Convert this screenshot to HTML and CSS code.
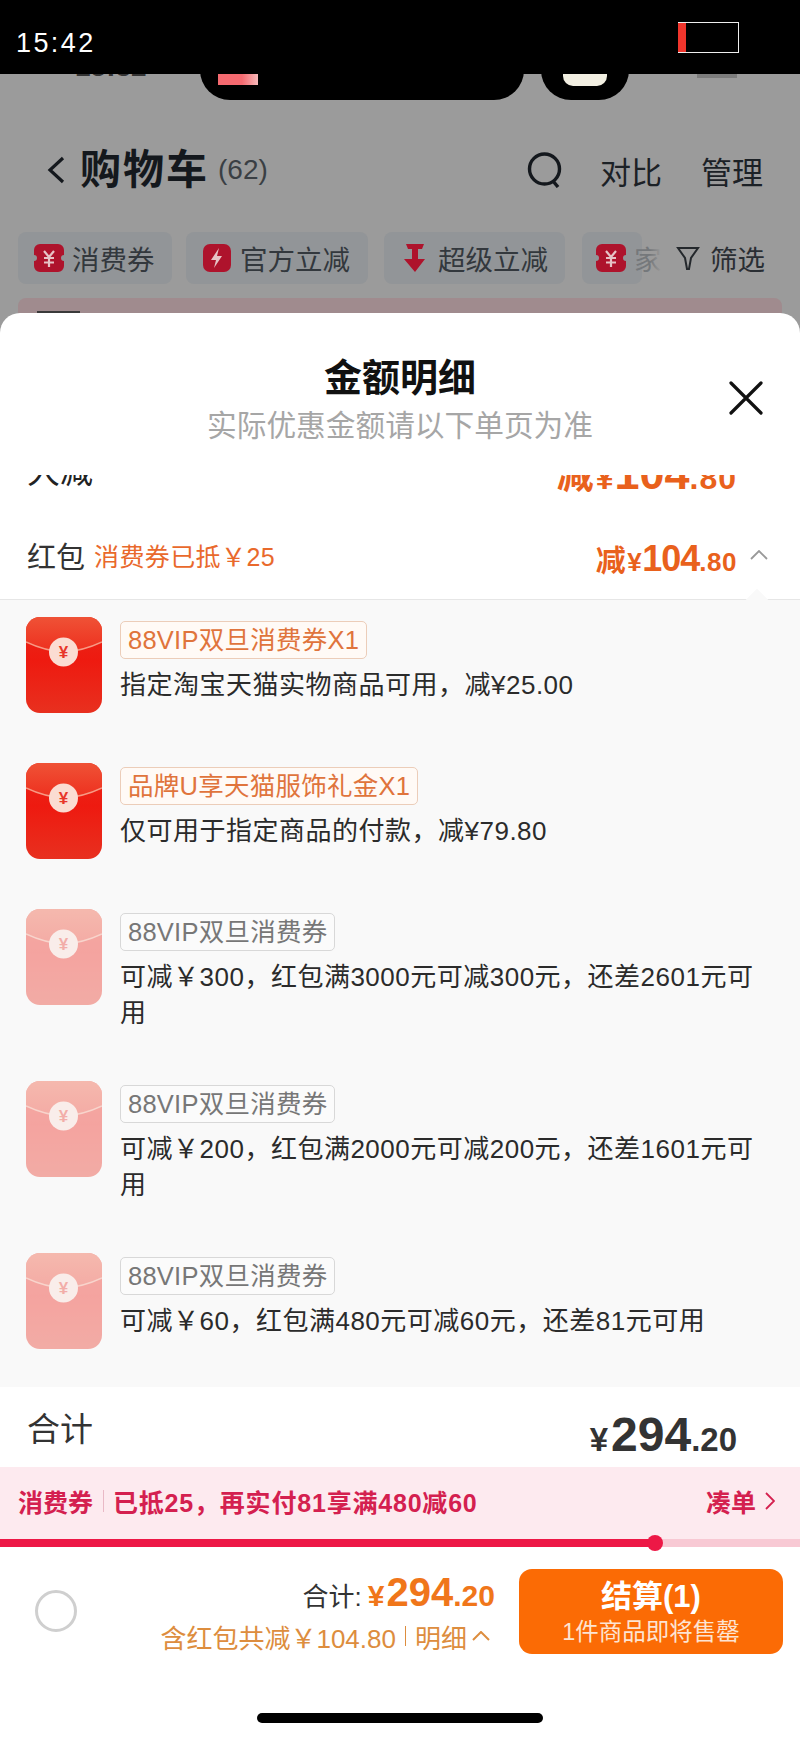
FILE: index.html
```html
<!DOCTYPE html>
<html lang="zh-CN">
<head>
  <meta charset="UTF-8">
  <title>金额明细</title>
  <link rel="stylesheet" href="styles.css">
</head>
<body>

  <svg class="defs" width="0" height="0" aria-hidden="true">
    <defs>
      <linearGradient id="flap" x1="0" y1="0" x2="0" y2="1">
        <stop offset="0" stop-color="#ef5236"/>
        <stop offset="1" stop-color="#ee2f1e"/>
      </linearGradient>
      <linearGradient id="pocket" x1="0" y1="0" x2="0" y2="1">
        <stop offset="0" stop-color="#e8281a"/>
        <stop offset="0.45" stop-color="#ee1a10"/>
        <stop offset="1" stop-color="#e8301f"/>
      </linearGradient>
      <symbol id="packet" viewBox="0 0 76 96">
        <rect width="76" height="96" rx="14" fill="url(#pocket)"/>
        <path d="M0 25 Q19 34 38 35 Q57 34 76 25 V14 A14 14 0 0 0 62 0 H14 A14 14 0 0 0 0 14 Z" fill="url(#flap)"/>
        <path d="M0 25 Q19 34 38 35 Q57 34 76 25" fill="none" stroke="#f79a85" stroke-width="1.5"/>
        <circle cx="37.5" cy="35" r="14.5" fill="#fbdcd2"/>
        <text x="37.5" y="41" class="seal">¥</text>
      </symbol>
    </defs>
  </svg>

  <div class="status">
    <span class="clock">15:42</span>
    <span class="battery"><span class="battery-low"></span></span>
  </div>

  <div class="notch notch-wide"><span class="notch-pink"></span></div>
  <div class="notch notch-small"><span class="notch-cream"></span></div>

  <div class="page">
    <div class="peek"><span class="peek-time">15:32</span><span class="peek-batt"></span></div>

    <div class="nav">
      <svg class="back" viewBox="0 0 18 28"><path d="M16 2 L3 14 L16 26" fill="none" stroke="#14181d" stroke-width="3.2"/></svg>
      <span class="nav-title">购物车</span>
      <span class="nav-count">(62)</span>
      <svg class="search" viewBox="0 0 36 36"><circle cx="17.5" cy="17" r="15" fill="none" stroke="#14181d" stroke-width="3.4"/><path d="M26 29 L31 35" stroke="#14181d" stroke-width="3.4"/></svg>
      <span class="nav-link">对比</span>
      <span class="nav-link nav-link-last">管理</span>
    </div>

    <div class="chips">
      <div class="chip chip-a">
        <svg class="chip-icon" viewBox="0 0 30 28"><path d="M6 0 H24 A6 6 0 0 1 30 6 V11 A3 3 0 0 0 30 17 V22 A6 6 0 0 1 24 28 H6 A6 6 0 0 1 0 22 V17 A3 3 0 0 0 0 11 V6 A6 6 0 0 1 6 0 Z" fill="#ae132c"/><path d="M10 7 L15 13 L20 7 M10 14 H20 M10 18.5 H20 M15 13 V23" fill="none" stroke="#e6c3c6" stroke-width="2.2"/></svg>
        <span>消费券</span>
      </div>
      <div class="chip chip-b">
        <svg class="chip-icon" viewBox="0 0 30 28"><rect width="28" height="28" x="1" rx="7" fill="#ae132c"/><path d="M17 4 L9 16 H14 L12 24 L20 12 H15 Z" fill="#e6c3c6"/></svg>
        <span>官方立减</span>
      </div>
      <div class="chip chip-c">
        <svg class="chip-icon" viewBox="0 0 24 28"><path d="M3 0 H21 L19 5 H15 V15 H22 L12 28 L1 15 H9 V5 H5 Z" fill="#ae132c"/></svg>
        <span>超级立减</span>
      </div>
      <div class="chip chip-d">
        <svg class="chip-icon" viewBox="0 0 30 28"><path d="M6 0 H24 A6 6 0 0 1 30 6 V11 A3 3 0 0 0 30 17 V22 A6 6 0 0 1 24 28 H6 A6 6 0 0 1 0 22 V17 A3 3 0 0 0 0 11 V6 A6 6 0 0 1 6 0 Z" fill="#ae132c"/><path d="M10 7 L15 13 L20 7 M10 14 H20 M10 18.5 H20 M15 13 V23" fill="none" stroke="#e6c3c6" stroke-width="2.2"/></svg>
        <span class="chip-fade">家</span>
      </div>
      <div class="filter">
        <svg class="filter-icon" viewBox="0 0 24 24"><path d="M2 2 H22 L15 12 L13 23 H11 L9 12 Z" fill="none" stroke="#24282c" stroke-width="2"/></svg>
        <span>筛选</span>
      </div>
    </div>

    <div class="tip-band"><span class="tip-mark"></span></div>
  </div>

  <div class="sheet">
    <div class="sheet-head">
      <div class="sheet-title">金额明细</div>
      <div class="sheet-sub">实际优惠金额请以下单页为准</div>
      <svg class="close" viewBox="0 0 34 34"><path d="M2 2 L32 32 M32 2 L2 32" stroke="#111" stroke-width="3.2" stroke-linecap="round"/></svg>
    </div>

    <div class="cut-row">
      <span class="cut-label">大减</span>
      <span class="amount amount-big"><span class="amount-cn">减</span>¥<b>104</b>.80</span>
    </div>

    <div class="packet-row">
      <span class="packet-label">红包</span>
      <span class="packet-note">消费券已抵￥25</span>
      <span class="amount amount-auto"><span class="amount-cn">减</span>¥<b>104</b>.80</span>
      <svg class="row-arrow" viewBox="0 0 18 10"><path d="M1 9 L9 1 L17 9" fill="none" stroke="#999" stroke-width="1.8"/></svg>
    </div>

    <div class="list">
      <span class="list-tick"></span>

      <div class="item">
        <svg class="packet-icon"><use href="#packet"/></svg>
        <div class="item-body">
          <span class="tag">88VIP双旦消费券X1</span>
          <p class="item-text">指定淘宝天猫实物商品可用，减¥25.00</p>
        </div>
      </div>

      <div class="item">
        <svg class="packet-icon"><use href="#packet"/></svg>
        <div class="item-body">
          <span class="tag">品牌U享天猫服饰礼金X1</span>
          <p class="item-text">仅可用于指定商品的付款，减¥79.80</p>
        </div>
      </div>

      <div class="item item-off">
        <svg class="packet-icon"><use href="#packet"/></svg>
        <div class="item-body">
          <span class="tag">88VIP双旦消费券</span>
          <p class="item-text">可减￥300，红包满3000元可减300元，还差2601元可用</p>
        </div>
      </div>

      <div class="item item-off">
        <svg class="packet-icon"><use href="#packet"/></svg>
        <div class="item-body">
          <span class="tag">88VIP双旦消费券</span>
          <p class="item-text">可减￥200，红包满2000元可减200元，还差1601元可用</p>
        </div>
      </div>

      <div class="item item-off">
        <svg class="packet-icon"><use href="#packet"/></svg>
        <div class="item-body">
          <span class="tag">88VIP双旦消费券</span>
          <p class="item-text">可减￥60，红包满480元可减60元，还差81元可用</p>
        </div>
      </div>
    </div>

    <div class="total">
      <span class="total-label">合计</span>
      <span class="total-amount">¥<b>294</b>.20</span>
    </div>

    <div class="promo">
      <span class="promo-name">消费券</span>
      <span class="promo-line"></span>
      <span class="promo-text">已抵25，再实付81享满480减60</span>
      <span class="promo-more">凑单</span>
      <svg class="promo-arrow" viewBox="0 0 10 18"><path d="M1 1 L9 9 L1 17" fill="none" stroke="#d4204f" stroke-width="1.8"/></svg>
    </div>

    <div class="progress"><div class="progress-fill" style="width: 655px"></div></div>

    <div class="checkout">
      <span class="radio"></span>
      <div class="prices">
        <div class="price-main">
          <span class="price-label">合计:</span>
          <span class="price-value">¥<b>294</b>.20</span>
        </div>
        <div class="price-note">含红包共减￥104.80<span class="price-bar"></span>明细
          <svg class="price-arrow" viewBox="0 0 18 10"><path d="M1 9 L9 1 L17 9" fill="none" stroke="#dd8d3e" stroke-width="2"/></svg>
        </div>
      </div>
      <div class="pay">
        <div class="pay-main">结算(1)</div>
        <div class="pay-sub">1件商品即将售罄</div>
      </div>
    </div>

    <div class="home-bar"></div>
  </div>

</body>
</html>
```

FILE: styles.css
```css
* {
  box-sizing: border-box;
}
body {
  position: relative;
  width: 800px;
  height: 1739px;
  margin: 0;
  overflow: hidden;
  background: #9b9b9b;
  font-family: "Liberation Sans", "Noto Sans CJK SC", sans-serif;
  color: #222;
}
p {
  margin: 0;
}
.defs {
  position: absolute;
}
.seal {
  font-family: "Liberation Sans", sans-serif;
  font-size: 17px;
  font-weight: 700;
  fill: #e8352a;
  text-anchor: middle;
}

/* status bar on top of the old screenshot */
.status {
  position: relative;
  z-index: 2;
  display: flex;
  justify-content: space-between;
  align-items: flex-start;
  height: 74px;
  padding: 22px 61px 0 16px;
  background: #000;
}
.clock {
  margin-top: 4px;
  color: #fff;
  font-size: 27px;
  line-height: 34px;
  letter-spacing: 2.4px;
}
.battery {
  display: block;
  width: 61px;
  height: 31px;
  border: 1px solid #eee;
  border-left: 0;
}
.battery-low {
  display: block;
  width: 8px;
  height: 29px;
  background: #f0352c;
}
.notch {
  position: absolute;
  top: 60px;
  z-index: 1;
  height: 40px;
  background: #000;
  border-radius: 0 0 30px 30px;
}
.notch-wide {
  left: 200px;
  width: 324px;
}
.notch-small {
  left: 541px;
  width: 88px;
}
.notch-pink {
  position: absolute;
  left: 18px;
  top: 14px;
  width: 40px;
  height: 11px;
  background: linear-gradient(90deg, #f56a70 60%, #f7b9ba);
}
.notch-cream {
  position: absolute;
  left: 22px;
  top: 14px;
  width: 44px;
  height: 12px;
  background: #f2efe2;
  border-radius: 0 0 10px 10px;
}

/* dimmed cart page */
.page {
  height: 239px;
  overflow: hidden;
}
.peek {
  display: flex;
  justify-content: space-between;
  align-items: flex-end;
  height: 4px;
  padding: 0 63px 0 75px;
  overflow: hidden;
}
.peek-time {
  font-size: 28px;
  line-height: 22px;
  font-weight: 700;
  color: #333;
}
.peek-batt {
  width: 40px;
  height: 4px;
  background: #7c7c7c;
}
.nav {
  display: flex;
  align-items: center;
  height: 52px;
  margin-top: 66px;
  padding-left: 47px;
  color: #14181d;
}
.back {
  width: 18px;
  height: 28px;
}
.nav-title {
  margin-left: 15px;
  font-size: 41px;
  line-height: 52px;
  font-weight: 700;
  letter-spacing: 2px;
}
.nav-count {
  margin-left: 9px;
  font-size: 28px;
  color: #3a3f44;
}
.search {
  width: 36px;
  height: 36px;
  margin-left: auto;
}
.nav-link {
  margin-left: 37px;
  font-size: 31px;
  color: #1c2126;
}
.nav-link-last {
  margin-left: 39px;
  margin-right: 37px;
}
.chips {
  position: relative;
  display: flex;
  height: 52px;
  margin-top: 36px;
  padding-left: 18px;
  overflow: hidden;
}
.chip {
  display: flex;
  align-items: center;
  flex: none;
  height: 52px;
  padding-left: 16px;
  background: #929598;
  border-radius: 8px;
  font-size: 27.5px;
  color: #33383d;
}
.chip-a {
  width: 154px;
}
.chip-b {
  width: 182px;
  margin-left: 14px;
}
.chip-c {
  width: 181px;
  margin-left: 16px;
}
.chip-d {
  width: 60px;
  margin-left: 17px;
  padding-left: 14px;
}
.chip-icon {
  flex: none;
  width: 30px;
  height: 28px;
  margin-right: 8px;
}
.chip-fade {
  flex: none;
  color: #75787b;
}
.filter {
  position: absolute;
  right: 0;
  top: 0;
  display: flex;
  align-items: center;
  width: 150px;
  height: 52px;
  padding-left: 26px;
  background: linear-gradient(90deg, rgba(155, 155, 155, 0), #9b9b9b 12px);
  font-size: 27.5px;
  color: #2a2e33;
}
.filter-icon {
  width: 24px;
  height: 24px;
  margin-right: 10px;
}
.tip-band {
  height: 15px;
  margin: 14px 18px 0;
  padding: 13px 0 0 19px;
  background: #a08b8e;
  border-radius: 8px 8px 0 0;
}
.tip-mark {
  display: block;
  width: 43px;
  height: 2px;
  background: #3a3a3a;
}

/* white sheet */
.sheet {
  height: 1426px;
  background: #fff;
  border-radius: 20px 20px 0 0;
}
.sheet-head {
  position: relative;
  height: 162px;
  padding-top: 44px;
  text-align: center;
}
.sheet-title {
  font-size: 38px;
  line-height: 42px;
  font-weight: 700;
  color: #111;
}
.sheet-sub {
  margin-top: 8px;
  font-size: 29.7px;
  line-height: 38px;
  color: #a6a6a6;
}
.close {
  position: absolute;
  right: 37px;
  top: 68px;
  width: 34px;
  height: 34px;
}
.cut-row {
  display: flex;
  justify-content: space-between;
  align-items: flex-end;
  height: 20px;
  padding: 0 63px 0 27px;
  overflow: hidden;
}
.cut-label {
  margin-bottom: 3px;
  font-size: 33px;
  line-height: 40px;
  flex: none;
}
.amount {
  flex: none;
  font-size: 26px;
  line-height: 40px;
  font-weight: 700;
  letter-spacing: 0.5px;
  color: #e9611c;
}
.amount b {
  font-size: 36px;
  letter-spacing: -1px;
}
.amount-cn {
  margin-right: 1px;
  font-size: 30px;
}
.amount-big {
  margin-bottom: -7px;
  font-size: 32px;
  line-height: 48px;
  letter-spacing: 1px;
}
.amount-big b {
  font-size: 45px;
  letter-spacing: 0;
}
.amount-big .amount-cn {
  font-size: 37px;
}
.packet-row {
  display: flex;
  align-items: center;
  height: 104px;
  padding: 16px 32px 0 27px;
}
.packet-label {
  font-size: 29px;
  color: #333;
}
.packet-note {
  margin-left: 9px;
  font-size: 25px;
  letter-spacing: 0.4px;
  color: #e9692c;
}
.amount-auto {
  margin-left: auto;
  padding-top: 10px;
}
.row-arrow {
  width: 18px;
  height: 10px;
  margin-left: 13px;
}

/* red packet list */
.list {
  position: relative;
  height: 788px;
  padding: 17px 30px 0 26px;
  background: #f9f9f9;
  border-top: 1px solid #e6e6e6;
}
.list-tick {
  position: absolute;
  left: 749px;
  top: -8px;
  width: 16px;
  height: 16px;
  background: #f9f9f9;
  transform: rotate(45deg);
}
.item {
  display: flex;
  gap: 18px;
  margin-bottom: 50px;
}
.item:last-child {
  margin-bottom: 0;
}
.packet-icon {
  flex: none;
  width: 76px;
  height: 96px;
}
.item-body {
  display: flex;
  flex-direction: column;
  align-items: flex-start;
  padding-top: 4px;
  min-width: 0;
}
.tag {
  height: 38px;
  padding: 0 7px;
  background: #fffaf6;
  border: 1px solid #eccdb9;
  border-radius: 5px;
  font-size: 25.5px;
  line-height: 36px;
  letter-spacing: 0.25px;
  color: #e0743c;
}
.item-text {
  margin-top: 8px;
  font-size: 26px;
  line-height: 36px;
  letter-spacing: 0.5px;
  color: #2b2b2b;
}
.item-off .packet-icon {
  opacity: 0.38;
}
.item-off .tag {
  background: #fbfbfb;
  border-color: #d8d8d8;
  color: #777;
}

/* totals and checkout */
.total {
  display: flex;
  justify-content: space-between;
  align-items: center;
  height: 80px;
  padding: 7px 63px 0 27px;
}
.total-label {
  margin-bottom: 7px;
  font-size: 33px;
  color: #333;
}
.total-amount {
  margin-top: 7px;
  font-size: 33px;
  font-weight: 700;
  color: #333;
}
.total-amount b {
  margin-left: 3px;
  font-size: 48px;
}
.promo {
  display: flex;
  align-items: center;
  height: 72px;
  padding: 0 25px 4px 18px;
  background: #fdeaef;
  font-size: 25px;
  font-weight: 700;
  color: #d4204f;
}
.promo-line {
  width: 1px;
  height: 22px;
  margin: 0 9px 0 10px;
  background: #e9b9c6;
}
.promo-text {
  letter-spacing: 0.8px;
}
.promo-more {
  margin-left: auto;
}
.promo-arrow {
  width: 10px;
  height: 18px;
  margin-left: 9px;
}
.progress {
  position: relative;
  height: 8px;
  background: #f8c9d4;
}
.progress-fill {
  position: relative;
  height: 8px;
  background: #ed1846;
}
.progress-fill::after {
  content: "";
  position: absolute;
  right: -8px;
  top: -4px;
  width: 16px;
  height: 16px;
  background: #ed1846;
  border-radius: 50%;
}
.checkout {
  display: flex;
  align-items: flex-start;
  height: 107px;
  padding: 22px 17px 0 35px;
}
.radio {
  flex: none;
  width: 42px;
  height: 42px;
  margin-top: 21px;
  border: 3px solid #cfcfcf;
  border-radius: 50%;
}
.prices {
  flex: 1;
  display: flex;
  flex-direction: column;
  align-items: flex-end;
  margin-right: 24px;
}
.price-main {
  display: flex;
  align-items: baseline;
  height: 48px;
  line-height: 46px;
}
.price-label {
  font-size: 26px;
  color: #333;
}
.price-value {
  margin-left: 6px;
  font-size: 30px;
  font-weight: 700;
  color: #f0761a;
}
.price-value b {
  margin-left: 2px;
  font-size: 40px;
}
.price-note {
  display: flex;
  align-items: center;
  height: 38px;
  margin-right: 5px;
  font-size: 26px;
  color: #dd8d3e;
}
.price-bar {
  width: 1px;
  height: 20px;
  margin: 0 9px;
  background: #dd8d3e;
}
.price-arrow {
  width: 18px;
  height: 10px;
  margin-left: 5px;
}
.pay {
  flex: none;
  width: 264px;
  height: 85px;
  padding-top: 9px;
  background: #fb6b05;
  border-radius: 13px;
  text-align: center;
}
.pay-main {
  font-size: 31px;
  line-height: 38px;
  font-weight: 700;
  color: #fff;
}
.pay-sub {
  margin-top: 1px;
  font-size: 23.5px;
  line-height: 30px;
  color: #fde4d2;
}
.home-bar {
  width: 286px;
  height: 10px;
  margin: 59px auto 0;
  background: #000;
  border-radius: 5px;
}
```
